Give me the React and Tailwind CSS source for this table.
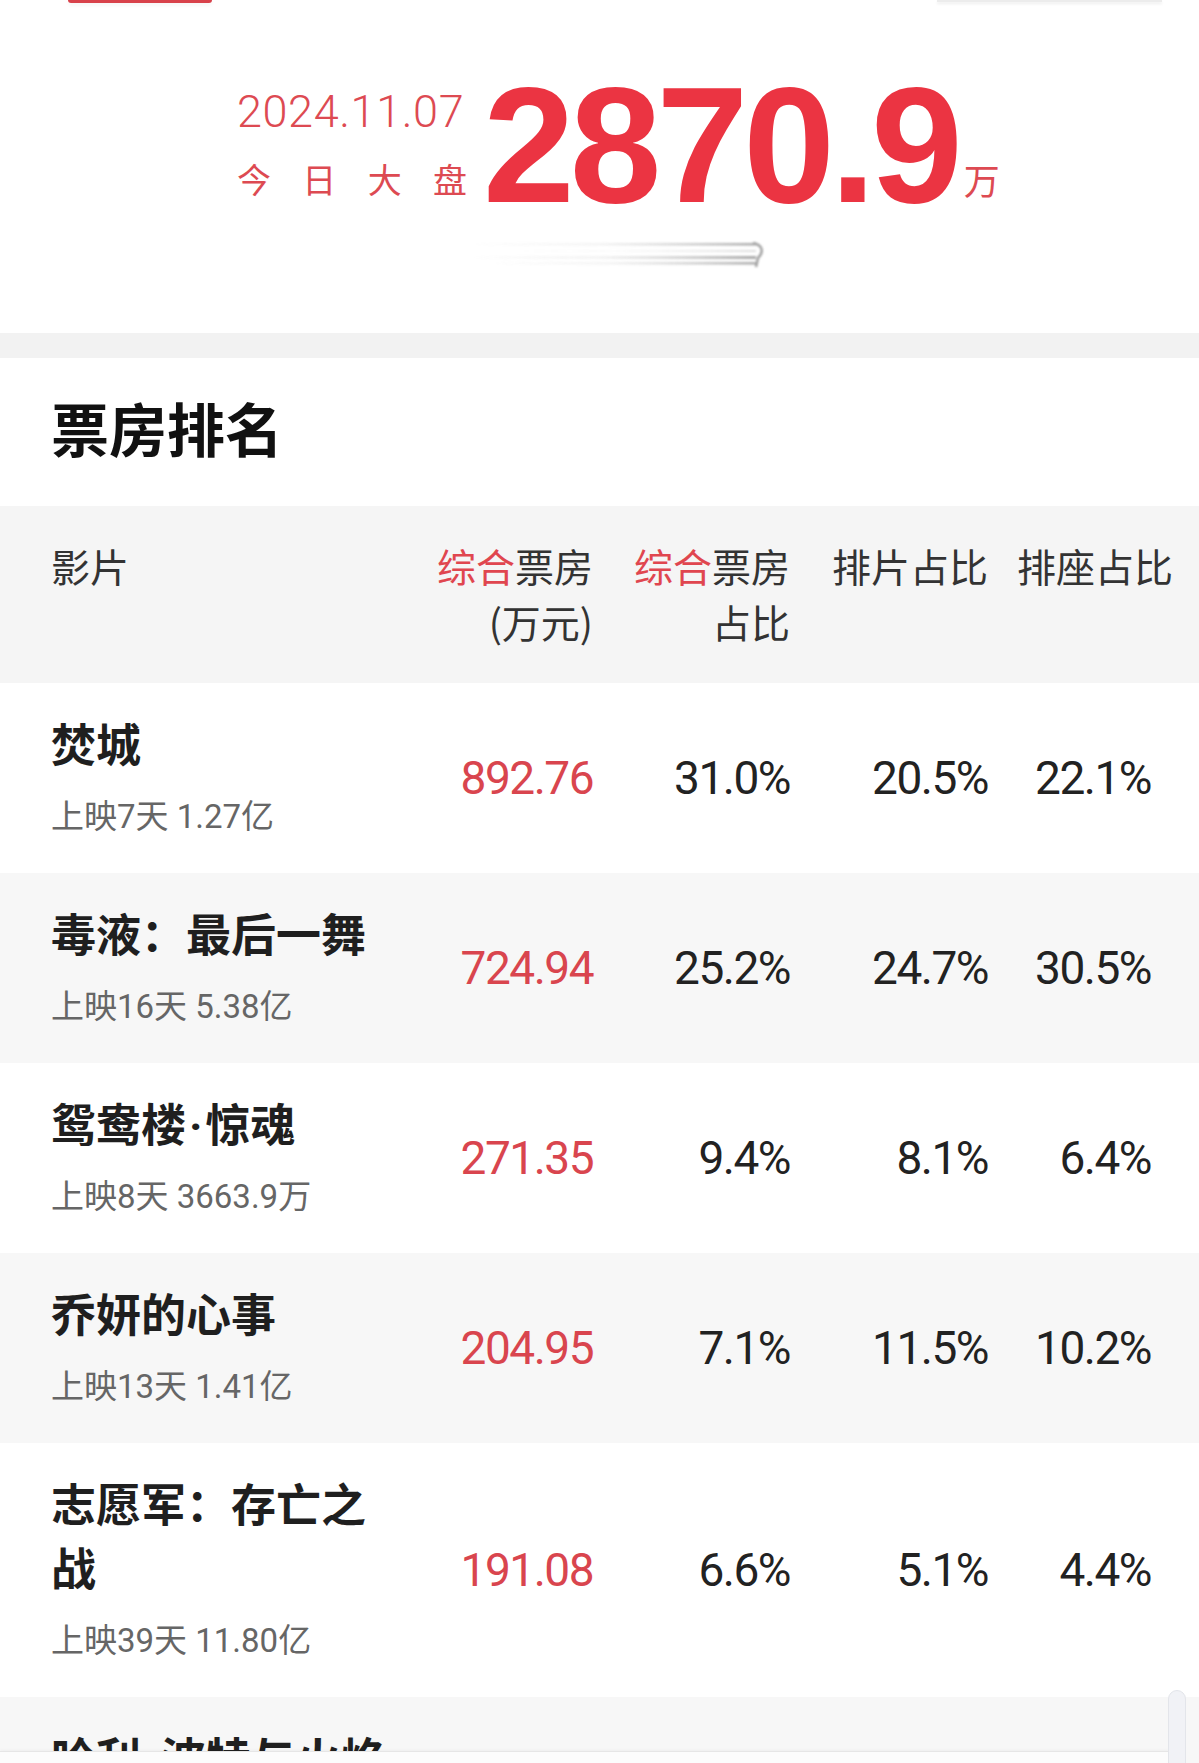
import React from "react";

const rows = [
  { name: ["焚城"], sub: "上映7天 1.27亿", v: ["892.76", "31.0%", "20.5%", "22.1%"], gray: false },
  { name: ["毒液：最后一舞"], sub: "上映16天 5.38亿", v: ["724.94", "25.2%", "24.7%", "30.5%"], gray: true },
  { name: ["鸳鸯楼", "惊魂"], sub: "上映8天 3663.9万", v: ["271.35", "9.4%", "8.1%", "6.4%"], gray: false },
  { name: ["乔妍的心事"], sub: "上映13天 1.41亿", v: ["204.95", "7.1%", "11.5%", "10.2%"], gray: true },
  { name: ["志愿军：存亡之战"], sub: "上映39天 11.80亿", v: ["191.08", "6.6%", "5.1%", "4.4%"], gray: false },
  { name: ["哈利", "波特与火焰杯"], sub: "上映1天 191.2万", v: ["181.30", "6.3%", "4.9%", "4.1%"], gray: true },
];

function Name({ parts }) {
  if (parts.length === 1) return parts[0];
  return (
    <>
      {parts[0]}
      <span className="mx-[3px]">·</span>
      {parts[1]}
    </>
  );
}

function Row({ r }) {
  return (
    <div className={`flex items-center pl-[51px] py-[32px] ${r.gray ? "bg-[#f7f7f7]" : "bg-white"}`}>
      <div className="w-[345px] shrink-0">
        <div className="text-[45px] leading-[64px] font-bold text-[#1f1f1f]">
          <Name parts={r.name} />
        </div>
        <div className="mt-[14px] text-[33px] leading-[48px] text-[#666666]">{r.sub}</div>
      </div>
      <div className="w-[197px] shrink-0 text-right text-[46px] tracking-[-1.5px] text-[#d9454e]">{r.v[0]}</div>
      <div className="w-[197px] shrink-0 text-right text-[46px] tracking-[-1.5px] text-[#222222]">{r.v[1]}</div>
      <div className="w-[198px] shrink-0 text-right text-[46px] tracking-[-1.5px] text-[#222222]">{r.v[2]}</div>
      <div className="w-[185px] shrink-0 text-right pr-[22px] text-[46px] tracking-[-1.5px] text-[#222222]">{r.v[3]}</div>
    </div>
  );
}

export default function App() {
  return (
    <div className="relative w-[1199px] h-[1763px] overflow-hidden bg-white [font-family:Roboto,'Noto_Sans_CJK_SC',sans-serif]">
      {/* top strip */}
      <div className="flex justify-between h-[3px]">
        <div className="ml-[68px] w-[144px] h-[3px] rounded-b-[3px] bg-[#d8424b] shadow-[0_2px_4px_rgba(0,0,0,0.06)]" />
        <div className="mr-[37px] w-[225px] h-[2px] bg-[#ececec] shadow-[0_2px_3px_rgba(0,0,0,0.08)]" />
      </div>

      {/* summary */}
      <div className="h-[330px]">
        <div className="flex items-start pl-[237px] pt-[60px]">
          <div className="w-[230px] flex flex-col shrink-0">
            <div className="mt-[26px] text-[45px] leading-[45px] font-light tracking-[0.6px] text-[#dd4a52]">2024.11.07</div>
            <div className="mt-[28px] flex justify-between text-[34px] leading-[34px] text-[#dd4a52] [font-family:'Noto_Sans_CJK_SC',sans-serif]">
              <span>今</span>
              <span>日</span>
              <span>大</span>
              <span>盘</span>
            </div>
          </div>
          <div className="ml-[16px] text-[165px] leading-[165px] font-bold tracking-[-5px] text-[#eb3442] [font-family:'Liberation_Sans',sans-serif]">
            2870.9
          </div>
          <div className="ml-[6px] mt-[98px] text-[36px] leading-[36px] text-[#dd4a52] [font-family:'Noto_Sans_CJK_SC',sans-serif]">万</div>
        </div>
        <div className="ml-[470px] mt-[12px] w-[295px] h-[30px] opacity-80">
          <svg width="295" height="30" viewBox="0 0 295 30" className="blur-[1.2px]">
            <defs>
              <linearGradient id="streak" x1="0" x2="1" y1="0" y2="0">
                <stop offset="0" stopColor="#b8b8b8" stopOpacity="0" />
                <stop offset="0.45" stopColor="#b8b8b8" stopOpacity="0.2" />
                <stop offset="1" stopColor="#808080" stopOpacity="0.85" />
              </linearGradient>
            </defs>
            <rect x="0" y="3" width="286" height="2.5" fill="url(#streak)" />
            <rect x="40" y="10" width="246" height="2" fill="url(#streak)" opacity="0.4" />
            <rect x="0" y="16" width="286" height="3" fill="url(#streak)" />
            <rect x="20" y="22" width="266" height="2.5" fill="url(#streak)" />
            <path d="M283 3 C293 5 294 12 288 18 L286 27" stroke="#8a8a8a" strokeWidth="2.5" fill="none" />
          </svg>
        </div>
      </div>

      {/* divider band */}
      <div className="h-[25px] bg-[#f2f2f2]" />

      {/* section title */}
      <div className="pl-[51px] pt-[37px] pb-[47px] text-[58px] leading-[64px] font-bold text-[#111111] [font-family:'Noto_Sans_CJK_SC',sans-serif]">
        票房排名
      </div>

      {/* header */}
      <div className="flex items-start pl-[51px] pt-[31px] pb-[34px] bg-[#f5f5f5] text-[39px] leading-[56px] text-[#333333] [font-family:'Noto_Sans_CJK_SC',sans-serif]">
        <div className="w-[345px] shrink-0">影片</div>
        <div className="w-[197px] shrink-0 text-right">
          <div>
            <span className="text-[#e0464f]">综合</span>票房
          </div>
          <div>(万元)</div>
        </div>
        <div className="w-[197px] shrink-0 text-right">
          <div>
            <span className="text-[#e0464f]">综合</span>票房
          </div>
          <div>占比</div>
        </div>
        <div className="w-[198px] shrink-0 text-right">排片占比</div>
        <div className="w-[185px] shrink-0 text-right">排座占比</div>
      </div>

      {/* rows */}
      {rows.map((r, i) => (
        <Row key={i} r={r} />
      ))}

      {/* bottom overlay */}
      <div className="absolute left-0 top-[1751px] w-[1170px] h-[20px] bg-[#fcfcfc] border-t border-[#e6e6e6] shadow-[0_-1px_3px_rgba(0,0,0,0.04)]" />
      <div className="absolute left-[1168px] top-[1690px] w-[18px] h-[90px] rounded-full bg-[#f1f2f6] border border-[#e3e5ea]" />
    </div>
  );
}
